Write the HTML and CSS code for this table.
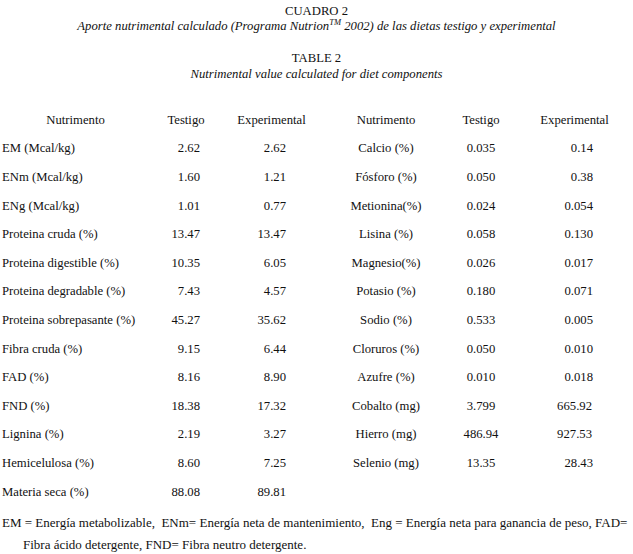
FILE: index.html
```html
<!DOCTYPE html>
<html lang="es">
<head>
<meta charset="utf-8">
<title>Cuadro 2</title>
<link rel="stylesheet" href="styles.css">
</head>
<body>
<header class="caption">
  <div class="cap-title">CUADRO 2</div>
  <div class="cap-sub">Aporte nutrimental calculado (Programa Nutrion<sup>TM</sup> 2002) de las dietas testigo y experimental</div>
</header>
<header class="caption caption-en">
  <div class="cap-title">TABLE 2</div>
  <div class="cap-sub">Nutrimental value calculated for diet components</div>
</header>
<div class="grid">
  <div class="h c1">Nutrimento</div><div class="h c2">Testigo</div><div class="h c3">Experimental</div>
  <div class="h c4">Nutrimento</div><div class="h c5">Testigo</div><div class="h c6">Experimental</div>

  <div class="l">EM (Mcal/kg)</div><div class="n2">2.62</div><div class="n3">2.62</div>
  <div class="r">Calcio (%)</div><div class="n5">0.035</div><div class="n6">0.14</div>

  <div class="l">ENm (Mcal/kg)</div><div class="n2">1.60</div><div class="n3">1.21</div>
  <div class="r">Fósforo (%)</div><div class="n5">0.050</div><div class="n6">0.38</div>

  <div class="l">ENg (Mcal/kg)</div><div class="n2">1.01</div><div class="n3">0.77</div>
  <div class="r">Metionina(%)</div><div class="n5">0.024</div><div class="n6">0.054</div>

  <div class="l">Proteina cruda (%)</div><div class="n2">13.47</div><div class="n3">13.47</div>
  <div class="r">Lisina (%)</div><div class="n5">0.058</div><div class="n6">0.130</div>

  <div class="l">Proteina digestible (%)</div><div class="n2">10.35</div><div class="n3">6.05</div>
  <div class="r">Magnesio(%)</div><div class="n5">0.026</div><div class="n6">0.017</div>

  <div class="l">Proteina degradable (%)</div><div class="n2">7.43</div><div class="n3">4.57</div>
  <div class="r">Potasio (%)</div><div class="n5">0.180</div><div class="n6">0.071</div>

  <div class="l">Proteina sobrepasante (%)</div><div class="n2">45.27</div><div class="n3">35.62</div>
  <div class="r">Sodio (%)</div><div class="n5">0.533</div><div class="n6">0.005</div>

  <div class="l">Fibra cruda (%)</div><div class="n2">9.15</div><div class="n3">6.44</div>
  <div class="r">Cloruros (%)</div><div class="n5">0.050</div><div class="n6">0.010</div>

  <div class="l">FAD (%)</div><div class="n2">8.16</div><div class="n3">8.90</div>
  <div class="r">Azufre (%)</div><div class="n5">0.010</div><div class="n6">0.018</div>

  <div class="l">FND (%)</div><div class="n2">18.38</div><div class="n3">17.32</div>
  <div class="r">Cobalto (mg)</div><div class="n5">3.799</div><div class="n6 n6b">665.92</div>

  <div class="l">Lignina (%)</div><div class="n2">2.19</div><div class="n3">3.27</div>
  <div class="r">Hierro (mg)</div><div class="n5">486.94</div><div class="n6 n6b">927.53</div>

  <div class="l">Hemicelulosa (%)</div><div class="n2">8.60</div><div class="n3">7.25</div>
  <div class="r">Selenio (mg)</div><div class="n5">13.35</div><div class="n6">28.43</div>

  <div class="l">Materia seca (%)</div><div class="n2">88.08</div><div class="n3">89.81</div>
  <div class="r"></div><div class="n5"></div><div class="n6"></div>
</div>
<p class="note"><span class="note-line">EM = Energía metabolizable,&nbsp; ENm= Energía neta de mantenimiento,&nbsp; Eng = Energía neta para ganancia de peso, FAD=</span><span class="note-line note-indent">Fibra ácido detergente, FND= Fibra neutro detergente.</span></p>
</body>
</html>
```
FILE: styles.css
```css
html, body {
  margin: 0;
  padding: 0;
  background: #ffffff;
}
body {
  font-family: "Liberation Serif", "Times New Roman", serif;
  font-size: 12.7px;
  color: #111111;
  width: 633px;
}
.caption {
  text-align: center;
  padding-top: 4px;
}
.caption-en {
  padding-top: 17px;
}
.cap-title {
  line-height: 15px;
}
.cap-sub {
  font-style: italic;
  line-height: 15px;
}
.caption-en .cap-sub {
  line-height: 17px;
}
.cap-sub sup {
  font-size: 8.5px;
  line-height: 0;
  vertical-align: 5px;
}
.grid {
  display: grid;
  grid-template-columns: 147px 74px 97px 132px 58px 123px;
  grid-auto-rows: 28.6px;
  margin: 23px 0 0 2px;
  align-items: center;
}
.h { text-align: center; }
.c6 { padding-left: 6px; }
.l { text-align: left; white-space: nowrap; }
.n2 { text-align: right; padding-right: 23px; }
.n3 { text-align: right; padding-right: 34px; }
.r { text-align: center; }
.n5 { text-align: center; }
.n6 { text-align: right; padding-right: 40px; }
.n6b { padding-right: 41px; }
.note {
  margin: 6px 0 0 2px;
  font-size: 13px;
  line-height: 22px;
}
.note-line {
  display: block;
  white-space: nowrap;
}
.note-indent {
  padding-left: 21px;
}
```
